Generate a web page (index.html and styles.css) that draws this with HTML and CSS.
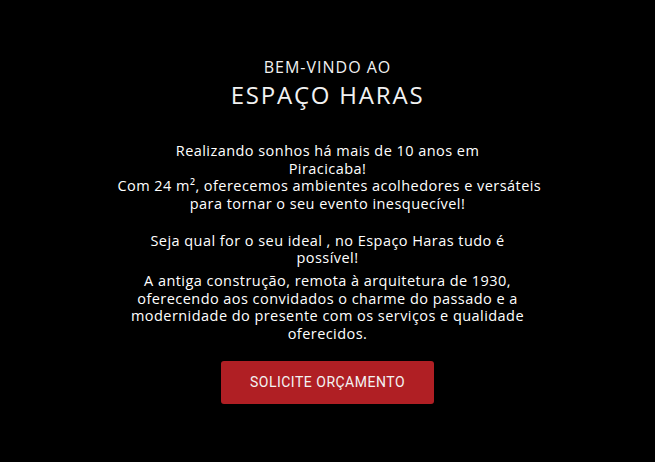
FILE: index.html
```html
<!DOCTYPE html>
<html lang="pt-BR">
<head>
<meta charset="utf-8">
<title>Espaço Haras</title>
<link rel="stylesheet" href="styles.css">
</head>
<body>
<section class="welcome">
  <h1 class="title">
    <span class="title-small">BEM-VINDO AO</span>
    <span class="title-big">ESPAÇO HARAS</span>
  </h1>
  <div class="text">
    <p class="para para-intro">Realizando sonhos há mais de 10 anos em<br>Piracicaba!<br>Com 24 m², oferecemos ambientes acolhedores e versáteis<br>para tornar o seu evento inesquecível!</p>
    <p class="para">Seja qual for o seu ideal , no Espaço Haras tudo é<br>possível!</p>
    <p class="para">A antiga construção, remota à arquitetura de 1930, oferecendo aos convidados o charme do passado e a modernidade do presente com os serviços e qualidade oferecidos.</p>
  </div>
  <a class="cta" href="#">SOLICITE ORÇAMENTO</a>
</section>
</body>
</html>
```
FILE: styles.css
```css
html, body {
  margin: 0;
  padding: 0;
  background: #000;
}
.welcome {
  display: flex;
  flex-direction: column;
  align-items: center;
  padding-top: 56px;
  color: #fff;
}
.title {
  margin: 0;
  display: flex;
  flex-direction: column;
  align-items: center;
  font-family: "Open Sans", sans-serif;
  font-weight: 400;
  color: #f2f2f2;
}
.title-small {
  font-size: 16px;
  line-height: 22px;
  letter-spacing: 1px;
}
.title-big {
  font-size: 24px;
  line-height: 33px;
  letter-spacing: 1.8px;
}
.text {
  width: 420px;
  margin-top: 31px;
  text-align: center;
  font-family: "Open Sans", sans-serif;
  font-size: 14.5px;
  letter-spacing: 0.45px;
  line-height: 17.5px;
}
.para {
  margin: 0 0 5.5px;
}
.para-intro {
  margin-bottom: 19.5px;
  white-space: nowrap;
}
.cta {
  margin-top: 13px;
  width: 213px;
  height: 43px;
  display: flex;
  align-items: center;
  justify-content: center;
  background: #b01f24;
  border-radius: 3px;
  color: #f3f3f3;
  text-decoration: none;
  font-family: Roboto, sans-serif;
  font-size: 14px;
  letter-spacing: 0.5px;
}
```
